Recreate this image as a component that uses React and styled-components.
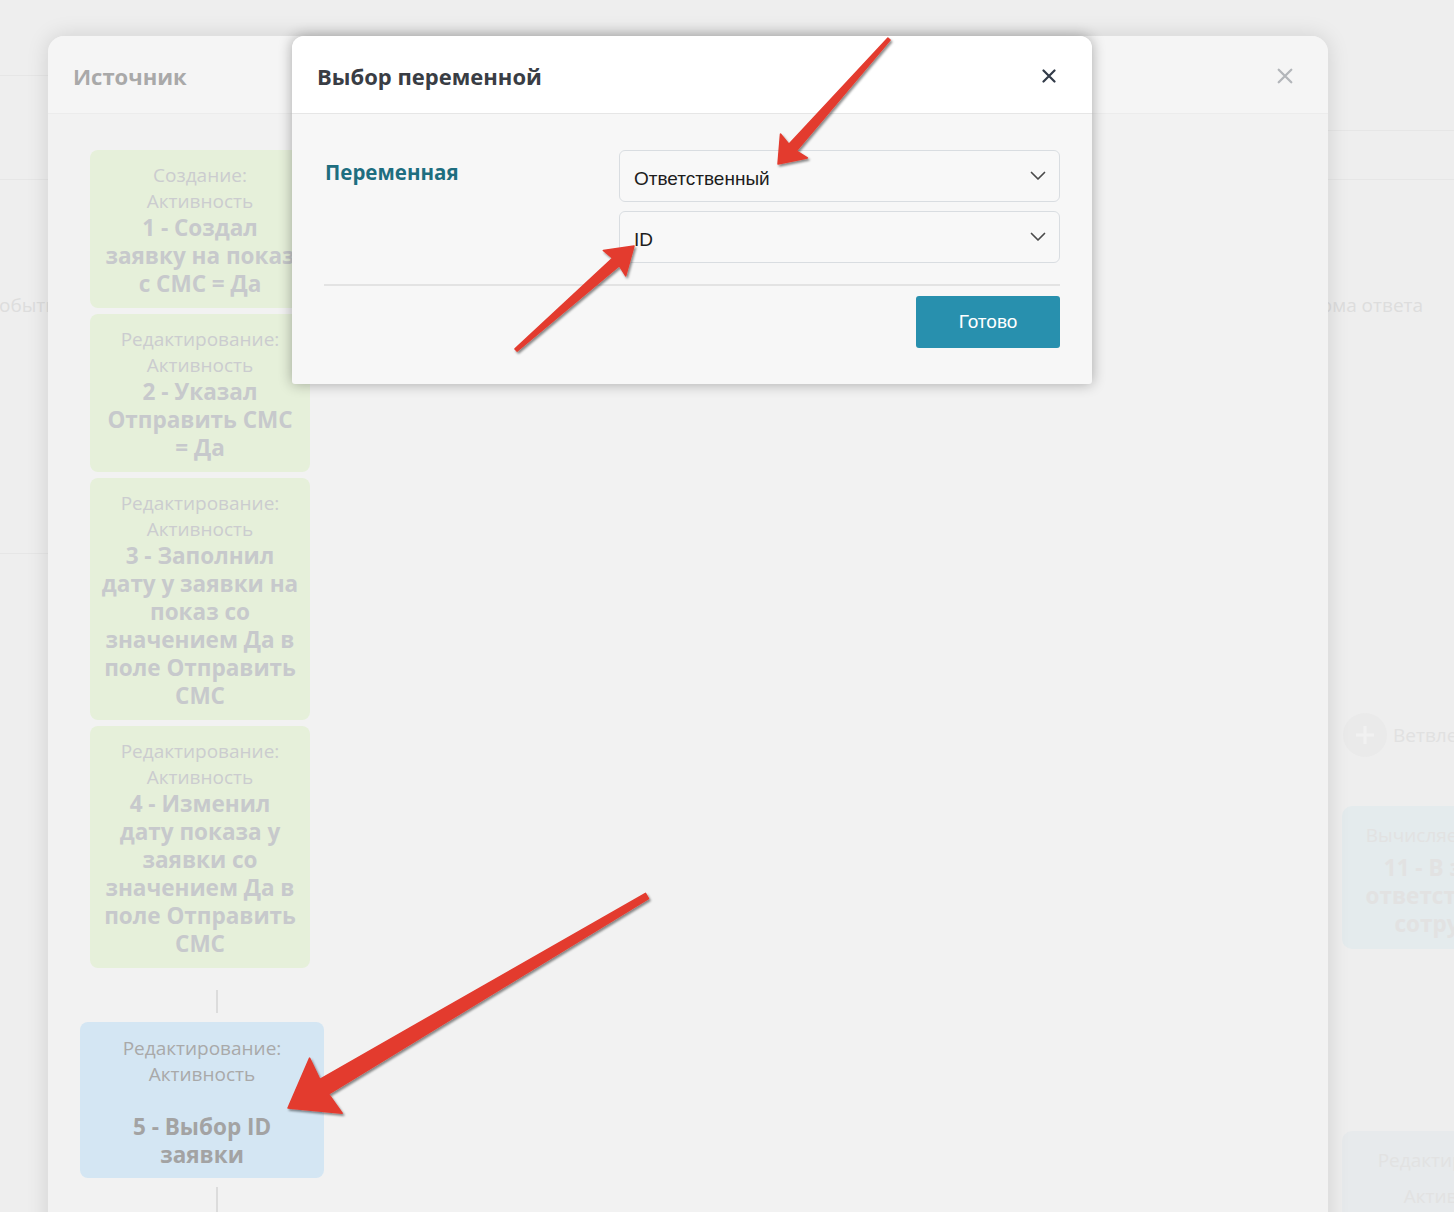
import React from "react";
import styled, { createGlobalStyle } from "styled-components";

const GlobalStyle = createGlobalStyle`
  html, body { margin: 0; padding: 0; }
  body {
    font-family: "Open Sans", "Liberation Sans", Arial, sans-serif;
    background: #eeeeee;
  }
`;

const Page = styled.div`
  position: relative;
  width: 100%;
  height: 1212px;
  overflow: hidden;
  background: #eeeeee;
`;

/* ---------- faded diagram behind the dialogs ---------- */
const Canvas = styled.div`
  position: absolute;
  inset: 0;
`;

const Rule = styled.div`
  position: absolute;
  left: ${(p) => p.$x}px;
  top: ${(p) => p.$y}px;
  width: ${(p) => p.$w}px;
  height: 1px;
  background: #e6e6e6;
`;

const CanvasLabel = styled.div`
  position: absolute;
  left: ${(p) => p.$x}px;
  top: ${(p) => p.$y}px;
  font-size: 19px;
  line-height: 26px;
  color: #dddddd;
  white-space: nowrap;
`;

const BranchNode = styled.div`
  position: absolute;
  left: ${(p) => p.$x}px;
  top: ${(p) => p.$y}px;
  display: flex;
  align-items: center;
  gap: 6px;
  font-size: 19px;
  color: #e1e1e1;
  white-space: nowrap;
`;

const BranchCircle = styled.div`
  width: 44px;
  height: 44px;
  border-radius: 50%;
  background: #eaeaea;
  display: flex;
  align-items: center;
  justify-content: center;
`;

const GhostCard = styled.div`
  position: absolute;
  left: ${(p) => p.$x}px;
  top: ${(p) => p.$y}px;
  width: 230px;
  height: ${(p) => p.$h}px;
  border-radius: 10px;
  background: ${(p) => p.$bg};
  padding: 16px 10px;
  box-sizing: border-box;
  text-align: center;
  color: #e2e2e2;
  display: flex;
  flex-direction: column;
  align-items: center;
`;

const GhostSub = styled.div`
  font-size: 19px;
  line-height: 26px;
  white-space: nowrap;
  margin-bottom: ${(p) => p.$mb || 0}px;
`;

const GhostMain = styled.div`
  font-size: 22.5px;
  font-weight: 700;
  line-height: 28px;
  white-space: nowrap;
`;

/* ---------- source dialog (background) ---------- */
const SourceDialog = styled.div`
  position: absolute;
  left: 48px;
  top: 36px;
  width: 1280px;
  bottom: -30px;
  display: flex;
  flex-direction: column;
  border-radius: 16px 16px 0 0;
  overflow: hidden;
  box-shadow: 0 0 22px rgba(0, 0, 0, 0.13);
`;

const SourceHeader = styled.div`
  flex: none;
  height: 78px;
  display: flex;
  align-items: center;
  justify-content: space-between;
  padding: 2px 35px 0 25px;
  box-sizing: border-box;
  background: #f5f5f5;
  border-bottom: 1px solid #ececec;
`;

const SourceTitle = styled.div`
  font-size: 22px;
  font-weight: 700;
  color: #a9a9a9;
`;

const SourceBody = styled.div`
  flex: 1;
  background: #f2f2f2;
  padding: 36px 0 0 32px;
  display: flex;
  flex-direction: column;
  align-items: flex-start;
`;

const CardStack = styled.div`
  display: flex;
  flex-direction: column;
  gap: 6px;
  margin-left: 10px;
`;

const StepCard = styled.div`
  width: ${(p) => (p.$tone === "blue" ? 244 : 220)}px;
  box-sizing: border-box;
  padding: ${(p) => (p.$tone === "blue" ? "13px 0 9px" : "12px 0 10px")};
  border-radius: 8px;
  background: ${(p) => (p.$tone === "blue" ? "#d4e6f3" : "#e6f0da")};
  text-align: center;
  display: flex;
  flex-direction: column;
  align-items: center;
`;

const StepSub = styled.div`
  font-size: 19px;
  line-height: 26px;
  white-space: nowrap;
  color: ${(p) => (p.$tone === "blue" ? "#a9a9a9" : "#cbcccf")};
  min-height: 26px;
`;

const StepMain = styled.div`
  font-size: 22.5px;
  font-weight: 700;
  line-height: 28px;
  white-space: nowrap;
  color: ${(p) => (p.$tone === "blue" ? "#a3a3a3" : "#c7c9cc")};
`;

const Connector = styled.div`
  width: 2px;
  height: ${(p) => p.$h}px;
  margin: ${(p) => p.$mt}px 0 ${(p) => p.$mb}px 136px;
  background: #dcdcdc;
`;

/* ---------- variable dialog (front) ---------- */
const VarDialog = styled.div`
  position: absolute;
  left: 292px;
  top: 36px;
  width: 800px;
  background: #f7f7f7;
  border-radius: 12px 12px 3px 3px;
  overflow: hidden;
  box-shadow: 0 0 14px rgba(0, 0, 0, 0.32);
`;

const VarHeader = styled.div`
  height: 78px;
  box-sizing: border-box;
  display: flex;
  align-items: center;
  justify-content: space-between;
  padding: 2px 36px 0 25px;
  background: #ffffff;
  border-bottom: 1px solid #e6e6e6;
`;

const VarTitle = styled.div`
  font-size: 22px;
  font-weight: 700;
  color: #393d44;
`;

const CloseBtn = styled.button`
  border: none;
  background: none;
  padding: 0;
  width: 14px;
  height: 14px;
  display: flex;
  align-items: center;
  justify-content: center;
  cursor: pointer;
`;

const VarBody = styled.div`
  padding: 36px 32px 36px 32px;
`;

const FormRow = styled.div`
  display: grid;
  grid-template-columns: 295px 1fr;
`;

const FieldLabel = styled.div`
  padding: 8px 0 0 1px;
  font-size: 20.5px;
  line-height: 28px;
  font-weight: 700;
  color: #1e6e80;
`;

const Selects = styled.div`
  display: flex;
  flex-direction: column;
  gap: 9px;
`;

const SelectBox = styled.div`
  height: 52px;
  box-sizing: border-box;
  border: 1px solid #d9dde1;
  border-radius: 6px;
  background: #f8f8f8;
  display: flex;
  align-items: center;
  justify-content: space-between;
  padding: 5px 13px 0 14px;
  font-family: "Liberation Sans", Arial, sans-serif;
  font-size: 19px;
  color: #1d1d1d;
`;

const Chevron = styled.svg`
  margin-top: -6px;
`;

const Divider = styled.div`
  height: 2px;
  background: #e3e3e3;
  margin: 21px 0 10px;
`;

const Footer = styled.div`
  display: flex;
  justify-content: flex-end;
`;

const DoneButton = styled.button`
  width: 144px;
  height: 52px;
  border: none;
  border-radius: 3px;
  background: #2890ae;
  color: #ffffff;
  font-family: "Liberation Sans", Arial, sans-serif;
  font-size: 19px;
  cursor: pointer;
`;

/* ---------- annotation arrows ---------- */
const Annotations = styled.svg`
  position: absolute;
  left: 0;
  top: 0;
  pointer-events: none;
`;

function arrowPoints(tail, tip, head, barb, s0, s1) {
  const dx = tip[0] - tail[0];
  const dy = tip[1] - tail[1];
  const len = Math.hypot(dx, dy);
  const d = [dx / len, dy / len];
  const n = [-d[1], d[0]];
  const b = [tip[0] - d[0] * head, tip[1] - d[1] * head];
  const pts = [
    [tail[0] + (n[0] * s0) / 2, tail[1] + (n[1] * s0) / 2],
    [b[0] + (n[0] * s1) / 2, b[1] + (n[1] * s1) / 2],
    [b[0] + n[0] * barb - d[0] * 2, b[1] + n[1] * barb - d[1] * 2],
    tip,
    [b[0] - n[0] * barb - d[0] * 2, b[1] - n[1] * barb - d[1] * 2],
    [b[0] - (n[0] * s1) / 2, b[1] - (n[1] * s1) / 2],
    [tail[0] - (n[0] * s0) / 2, tail[1] - (n[1] * s0) / 2],
  ];
  return pts.map((p) => `${p[0].toFixed(1)},${p[1].toFixed(1)}`).join(" ");
}

const ARROWS = [
  { tail: [889, 39], tip: [778, 164], head: 22, barb: 18, s0: 3, s1: 10 },
  { tail: [516, 350], tip: [634, 246], head: 24, barb: 17, s0: 3, s1: 10 },
  { tail: [647, 896], tip: [288, 1108], head: 42, barb: 32, s0: 6, s1: 17 },
];

const GREEN_CARDS = [
  { sub: ["Создание:", "Активность"], main: ["1 - Создал", "заявку на показ", "с СМС = Да"] },
  { sub: ["Редактирование:", "Активность"], main: ["2 - Указал", "Отправить СМС", "= Да"] },
  {
    sub: ["Редактирование:", "Активность"],
    main: ["3 - Заполнил", "дату у заявки на", "показ со", "значением Да в", "поле Отправить", "СМС"],
  },
  {
    sub: ["Редактирование:", "Активность"],
    main: ["4 - Изменил", "дату показа у", "заявки со", "значением Да в", "поле Отправить", "СМС"],
  },
];

function XIcon({ color, size = 14, width = 2 }) {
  return (
    <svg width={size} height={size} viewBox="0 0 14 14">
      <path d="M1.5 1.5L12.5 12.5M12.5 1.5L1.5 12.5" stroke={color} strokeWidth={width} strokeLinecap="round" />
    </svg>
  );
}

function Select({ value }) {
  return (
    <SelectBox>
      <span>{value}</span>
      <Chevron width="16" height="10" viewBox="0 0 16 10">
        <path d="M1.5 1.5L8 8L14.5 1.5" fill="none" stroke="#4a4a4a" strokeWidth="1.7" strokeLinecap="round" strokeLinejoin="round" />
      </Chevron>
    </SelectBox>
  );
}

export default function App() {
  return (
    <>
      <GlobalStyle />
      <Page>
        <Canvas>
          <Rule $x={0} $y={75} $w={60} />
          <Rule $x={0} $y={179} $w={1454} />
          <Rule $x={0} $y={553} $w={60} />
          <Rule $x={1320} $y={130} $w={134} />
          <CanvasLabel $x={-13} $y={292}>Событие</CanvasLabel>
          <CanvasLabel $x={1294} $y={292}>Форма ответа</CanvasLabel>
          <BranchNode $x={1343} $y={713}>
            <BranchCircle>
              <svg width="26" height="26" viewBox="0 0 26 26">
                <path d="M13 4V22M4 13H22" stroke="#f1f1f1" strokeWidth="3" />
              </svg>
            </BranchCircle>
            Ветвление
          </BranchNode>
          <GhostCard $x={1342} $y={806} $h={143} $bg="#e4ebed">
            <GhostSub $mb={6}>Вычисляемое поле:</GhostSub>
            <GhostMain>11 - В заявке</GhostMain>
            <GhostMain>ответственный</GhostMain>
            <GhostMain>сотрудник</GhostMain>
          </GhostCard>
          <GhostCard $x={1342} $y={1131} $h={120} $bg="#e7eaec">
            <GhostSub $mb={10}>Редактирование:</GhostSub>
            <GhostSub>Активность</GhostSub>
          </GhostCard>
        </Canvas>

        <SourceDialog>
          <SourceHeader>
            <SourceTitle>Источник</SourceTitle>
            <XIcon color="#b3b6ba" size={16} width={2} />
          </SourceHeader>
          <SourceBody>
            <CardStack>
              {GREEN_CARDS.map((c, i) => (
                <StepCard key={i} $tone="green">
                  {c.sub.map((t) => (
                    <StepSub key={t} $tone="green">{t}</StepSub>
                  ))}
                  {c.main.map((t) => (
                    <StepMain key={t} $tone="green">{t}</StepMain>
                  ))}
                </StepCard>
              ))}
            </CardStack>
            <Connector $h={23} $mt={22} $mb={9} />
            <StepCard $tone="blue">
              <StepSub $tone="blue">Редактирование:</StepSub>
              <StepSub $tone="blue">Активность</StepSub>
              <StepSub $tone="blue" />
              <StepMain $tone="blue">5 - Выбор ID</StepMain>
              <StepMain $tone="blue">заявки</StepMain>
            </StepCard>
            <Connector $h={40} $mt={9} $mb={0} />
          </SourceBody>
        </SourceDialog>

        <VarDialog>
          <VarHeader>
            <VarTitle>Выбор переменной</VarTitle>
            <CloseBtn aria-label="Закрыть">
              <XIcon color="#323b48" size={14} width={2.2} />
            </CloseBtn>
          </VarHeader>
          <VarBody>
            <FormRow>
              <FieldLabel>Переменная</FieldLabel>
              <Selects>
                <Select value="Ответственный" />
                <Select value="ID" />
              </Selects>
            </FormRow>
            <Divider />
            <Footer>
              <DoneButton>Готово</DoneButton>
            </Footer>
          </VarBody>
        </VarDialog>

        <Annotations width="1454" height="1212" viewBox="0 0 1454 1212">
          <defs>
            <filter id="arrowShadow" x="-20%" y="-20%" width="140%" height="140%">
              <feDropShadow dx="1.5" dy="2" stdDeviation="1" floodColor="#000" floodOpacity="0.45" />
            </filter>
          </defs>
          {ARROWS.map((a, i) => (
            <polygon
              key={i}
              points={arrowPoints(a.tail, a.tip, a.head, a.barb, a.s0, a.s1)}
              fill="#e33b2f"
              strokeLinejoin="round"
              stroke="#e33b2f"
              strokeWidth="1.5"
              filter="url(#arrowShadow)"
            />
          ))}
        </Annotations>
      </Page>
    </>
  );
}
